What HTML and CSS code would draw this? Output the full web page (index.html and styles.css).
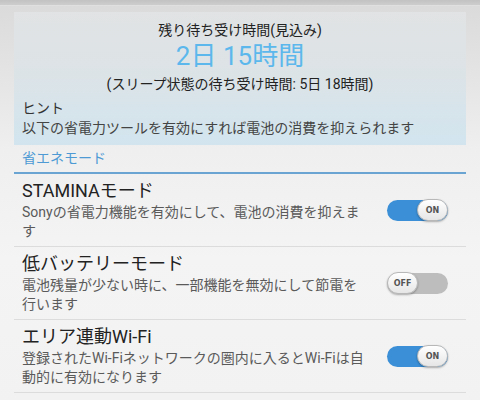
FILE: index.html
```html
<!DOCTYPE html>
<html lang="ja">
<head>
<meta charset="utf-8">
<link rel="stylesheet" href="styles.css">
</head>
<body>
<div class="topbar"></div>
<main class="page">
  <section class="panel">
    <div class="panel-title">残り待ち受け時間(見込み)</div>
    <div class="panel-big">2日 15時間</div>
    <div class="panel-sub">(スリープ状態の待ち受け時間: 5日 18時間)</div>
    <div class="hint-label">ヒント</div>
    <div class="hint-text">以下の省電力ツールを有効にすれば電池の消費を抑えられます</div>
  </section>
  <div class="section-header">省エネモード</div>
  <div class="row">
    <div class="row-text">
      <div class="row-title">STAMINAモード</div>
      <div class="row-desc">Sonyの省電力機能を有効にして、電池の消費を抑えます</div>
    </div>
    <div class="toggle on"><span class="knob">ON</span></div>
  </div>
  <div class="row">
    <div class="row-text">
      <div class="row-title">低バッテリーモード</div>
      <div class="row-desc">電池残量が少ない時に、一部機能を無効にして節電を行います</div>
    </div>
    <div class="toggle off"><span class="knob">OFF</span></div>
  </div>
  <div class="row">
    <div class="row-text">
      <div class="row-title">エリア連動Wi-Fi</div>
      <div class="row-desc">登録されたWi-Fiネットワークの圏内に入るとWi-Fiは自動的に有効になります</div>
    </div>
    <div class="toggle on"><span class="knob">ON</span></div>
  </div>
</main>
</body>
</html>
```
FILE: styles.css
```css
html, body {
  margin: 0;
  padding: 0;
}
body {
  width: 480px;
  height: 400px;
  overflow: hidden;
  background: linear-gradient(180deg, #dadada 0px, #e2e2e2 60px, #efefef 150px, #f4f4f4 260px, #f2f2f2 100%);
  font-family: "Roboto", "Noto Sans CJK JP", sans-serif;
  color: #222;
}
.topbar {
  height: 5px;
  background: linear-gradient(#c2c2c2, #cdcdcd);
  border-bottom: 1px solid #e0e0e0;
}
.page {
  padding: 6px 14px 0;
}
.panel {
  background: linear-gradient(180deg, #e1e3e4 0%, #dde3e6 40%, #d2e5ef 100%);
  padding: 8px 8px 7px;
}
.panel-title {
  text-align: center;
  font-size: 14px;
  line-height: 20px;
  color: #222;
}
.panel-big {
  text-align: center;
  font-size: 26px;
  line-height: 30px;
  margin-top: 1px;
  color: #5cb8ec;
}
.panel-sub {
  text-align: center;
  font-size: 14px;
  line-height: 20px;
  margin-top: 3px;
  color: #222;
}
.hint-label {
  font-size: 14px;
  line-height: 20px;
  margin-top: 4px;
  color: #333;
}
.hint-text {
  font-size: 14px;
  line-height: 20px;
  color: #444;
}
.section-header {
  margin-top: 3px;
  padding: 0 8px 4px;
  font-size: 14px;
  line-height: 20px;
  color: #4d9ad4;
  border-bottom: 2px solid #6aa4d2;
}
.row {
  display: flex;
  align-items: center;
  padding: 5px 0 5px 8px;
  border-bottom: 1px solid #dcdcdc;
}
.row-text {
  flex: 0 0 348px;
}
.row-title {
  font-size: 18px;
  line-height: 24px;
  color: #222;
}
.row-desc {
  font-size: 14px;
  line-height: 19px;
  color: #5a5a5a;
}
.toggle {
  margin-left: auto;
  margin-right: 18px;
  width: 61px;
  height: 21px;
  border-radius: 11px;
  display: flex;
  align-items: center;
  box-sizing: border-box;
}
.toggle.on {
  background: #3b8fd6;
  justify-content: flex-end;
}
.toggle.off {
  background: #bdbdbd;
  justify-content: flex-start;
}
.knob {
  width: 31px;
  height: 22px;
  border-radius: 11px;
  background: linear-gradient(#ffffff, #e6e6e6);
  border: 1px solid #b8b8b8;
  box-shadow: 0 1px 2px rgba(0,0,0,0.3);
  font-family: "DejaVu Sans", sans-serif;
  font-weight: bold;
  font-size: 8px;
  color: #555;
  display: flex;
  align-items: center;
  justify-content: center;
  box-sizing: border-box;
}
```
